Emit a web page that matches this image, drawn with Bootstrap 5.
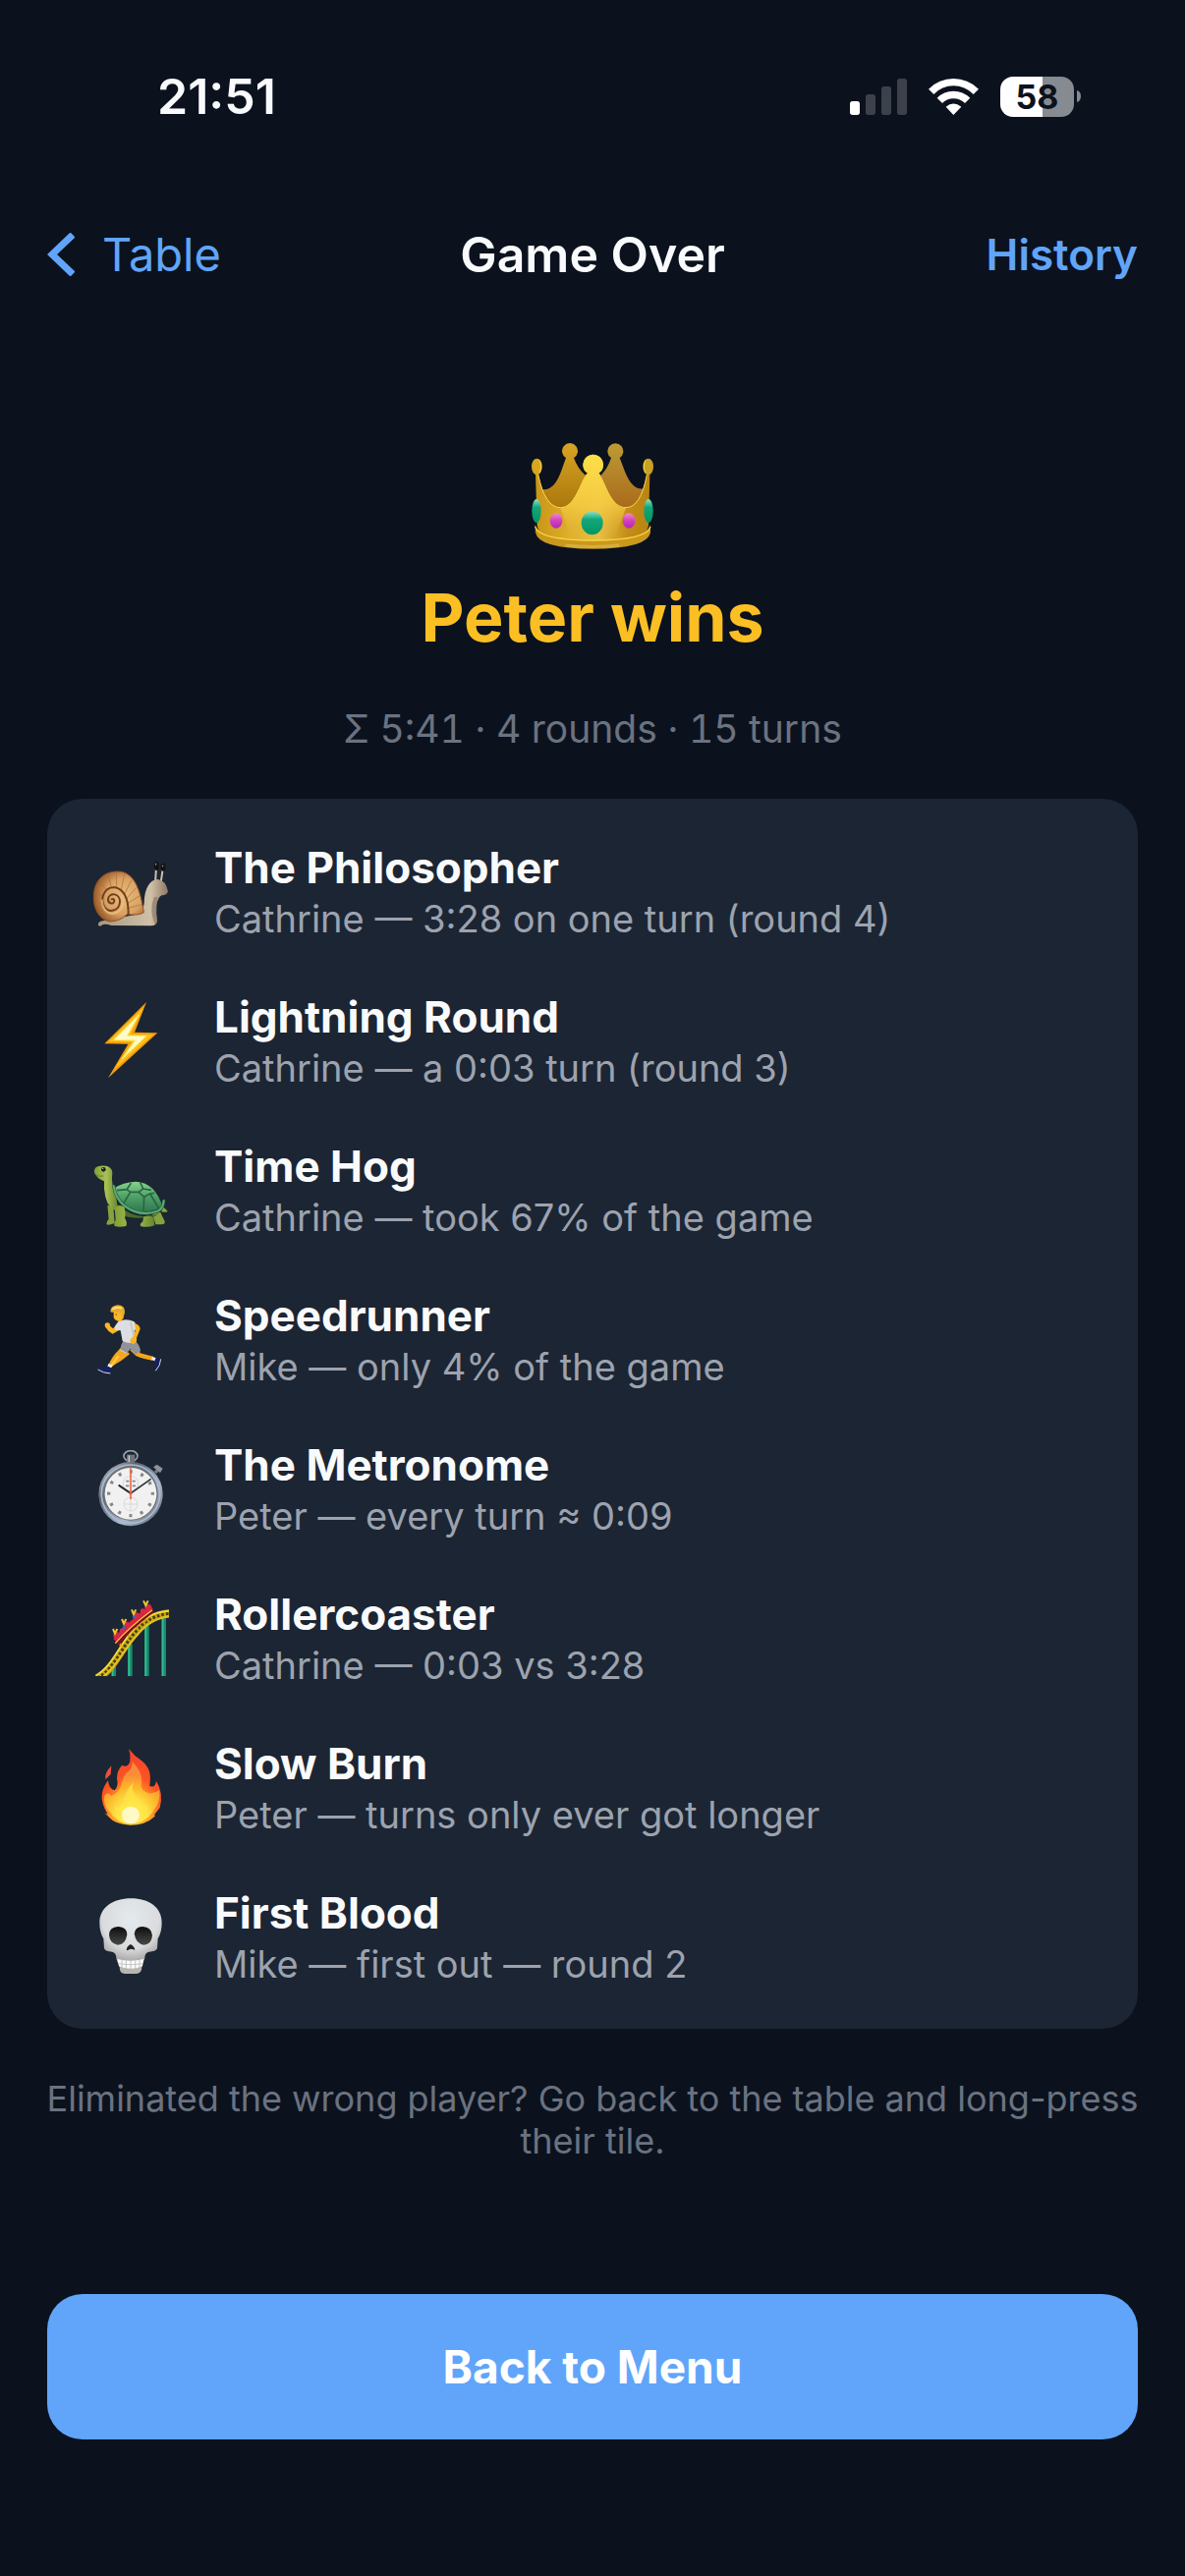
<!DOCTYPE html>
<html lang="en">
<head>
<meta charset="utf-8">
<meta name="viewport" content="width=device-width, initial-scale=1">
<title>Game Over</title>
<link rel="stylesheet" href="https://cdn.jsdelivr.net/npm/bootstrap@5.3.0/dist/css/bootstrap.min.css">
<style>
  :root { --page: #0b121e; --panel: #1c2533; --accent: #60a5fa; --gold: #fbbf24; --muted: #9ca3af; --faint: #6b7280; }
  body { background: var(--page); color: #f9fafb; font-family: Inter, "Liberation Sans", sans-serif; }
  svg { display: block; flex-shrink: 0; }
  .screen { min-height: 100vh; padding: 0 48px; }
  .status-bar { height: 160px; padding: 68px 58px 0 112px; }
  .clock { font-size: 50px; line-height: 60px; font-weight: 600; }
  .signals { gap: 22px; height: 60px; }
  .battery { gap: 3px; }
  .cell { width: 75px; height: 41px; border-radius: 13px; background: linear-gradient(90deg, #fff 57%, #868a91 57%); color: var(--page); font-size: 34px; line-height: 41px; font-weight: 700; }
  .top-nav { height: 198px; }
  .top-nav a, .top-nav h1 { line-height: 60px; }
  .side { flex: 1 1 0; }
  .back { font-size: 47px; gap: 28px; color: var(--accent); }
  .heading { font-size: 50px; font-weight: 600; }
  .history { font-size: 44px; font-weight: 600; color: var(--accent); }
  .winner { padding-top: 93px; }
  .winner h2 { font-size: 68px; line-height: 88px; font-weight: 700; color: var(--gold); margin: 25px 0 0; }
  .summary { font-size: 39px; line-height: 48px; font-variant-numeric: tabular-nums; color: var(--faint); margin: 46px 0 0; }
  .awards { margin: 47px 0 0; padding: 18px 46px; background: var(--panel); border-radius: 36px; }
  .award { height: 152px; gap: 46px; }
  .award svg { width: 78px; height: 78px; }
  .award h2 { font-size: 44px; line-height: 56px; font-weight: 700; margin: 0; }
  .award p { font-size: 38px; line-height: 48px; color: var(--muted); margin: 0; }
  .hint { font-size: 36px; line-height: 43px; color: var(--faint); margin: 50px -12px 0; }
  .menu-btn { margin-top: 134px; height: 148px; border-radius: 36px; color: #fff; font-size: 46px; font-weight: 700; border: 0; --bs-btn-bg: var(--accent); }
</style>
</head>
<body>
<main class="screen d-flex flex-column">
  <header class="status-bar d-flex justify-content-between">
    <span class="clock">21:51</span>
    <div class="signals d-flex align-items-center">
      <svg width="58" height="37" viewBox="75 57 174 111"><rect x="75" y="126" width="30" height="42" rx="8" fill="#fff"/><g fill="#3c414b"><rect x="123" y="105" width="30" height="63" rx="8"/><rect x="171" y="81" width="30" height="87" rx="8"/><rect x="219" y="57" width="30" height="111" rx="8"/></g></svg>
      <svg width="51" height="37" viewBox="315 57 153 111"><path d="M315 89Q347 57 391 57T468 89L452 105Q426 79 391 79T331 105ZM341 116Q362 95 391 95T442 116L426 132Q412 118 391 118T357 132ZM368 143Q391 124 415 143L391 168Z" fill="#fff"/></svg>
      <div class="battery d-flex align-items-center"><span class="cell text-center">58</span><svg width="4" height="12" viewBox="0 0 4 12"><path d="M0 0Q4 1 4 6T0 12Z" fill="#868a91"/></svg></div>
    </div>
  </header>

  <nav class="top-nav d-flex align-items-center">
    <div class="side"><a href="#" class="back d-inline-flex align-items-center text-decoration-none"><svg width="28" height="44" viewBox="0 0 28 44"><path d="M26 2L5 22L26 42" fill="none" stroke="#60a5fa" stroke-width="7"/></svg>Table</a></div>
    <h1 class="heading m-0">Game Over</h1>
    <div class="side text-end"><a href="#" class="history text-decoration-none">History</a></div>
  </nav>

  <section class="winner text-center d-flex flex-column align-items-center">
    <svg width="124" height="108" viewBox="117 93 372 324" role="img" aria-label="Crown">
      <defs>
        <linearGradient id="cr-f" x1="0" y1="0" x2="1" y2="0"><stop offset="0" stop-color="#c99516"/><stop offset=".3" stop-color="#dfae2c"/><stop offset=".55" stop-color="#e9c044"/><stop offset=".8" stop-color="#c48d18"/><stop offset="1" stop-color="#b88313"/></linearGradient>
        <linearGradient id="cr-t" x1="0" y1="0" x2="0" y2="1"><stop offset="0" stop-color="#fde047"/><stop offset=".6" stop-color="#f7cc43" stop-opacity=".8"/><stop offset="1" stop-color="#e5b93c" stop-opacity="0"/></linearGradient>
        <linearGradient id="cr-l" x1="0" y1="0" x2="0" y2="1"><stop offset="0" stop-color="#d8a425"/><stop offset="1" stop-color="#a8760a"/></linearGradient>
        <linearGradient id="cr-r" x1="0" y1="0" x2="0" y2="1"><stop offset="0" stop-color="#bd9b35"/><stop offset="1" stop-color="#a9681a"/></linearGradient>
        <linearGradient id="cr-g" x1="0" y1="0" x2="0" y2="1"><stop offset="0" stop-color="#8fe3c0"/><stop offset=".35" stop-color="#12a67c"/><stop offset="1" stop-color="#04965f"/></linearGradient>
        <linearGradient id="cr-p" x1="0" y1="0" x2="0" y2="1"><stop offset="0" stop-color="#f08ac4"/><stop offset=".5" stop-color="#d33fc0"/><stop offset="1" stop-color="#b22ab0"/></linearGradient>
      </defs>
      <path d="M150 234Q185 240 207 180L222 138A24 24 0 1 1 246 138Q258 172 282 192L260 300H170Z" fill="url(#cr-l)"/>
      <path d="M458 232Q425 238 402 180L386 138A24 24 0 1 0 360 138Q350 170 328 192L350 300H445Z" fill="url(#cr-r)"/>
      <path d="M129 188L138 187Q158 290 205 290C250 290 265 215 288 185A31 31 0 1 1 322 185C345 225 360 290 405 290Q450 290 469 187L478 188L474 345Q470 398 304 398T134 345Z" fill="url(#cr-f)"/>
      <path d="M205 292C250 290 265 215 288 185A31 31 0 1 1 322 185C345 225 360 290 405 292L370 385H240Z" fill="url(#cr-t)"/>
      <path d="M137 190Q158 290 205 290C250 290 265 215 286 187M324 187C345 225 360 290 405 290Q450 290 469 190" fill="none" stroke="#f5d84a" stroke-width="3"/>
      <ellipse cx="133" cy="165" rx="16" ry="25" fill="#d8a51f"/><ellipse cx="473" cy="165" rx="16" ry="25" fill="#c8a024"/><path d="M141 145Q151 165 141 184M465 145Q455 165 465 184" fill="none" stroke="#f3d94c" stroke-width="3"/>
      <path d="M127 340Q133 392 304 392T480 340V366Q470 416 304 416T129 366Z" fill="#c9981d"/>
      <path d="M128 348Q140 390 304 390T480 348" fill="none" stroke="#f6d43c" stroke-width="4"/>
      <path d="M220 405Q300 414 385 405" fill="none" stroke="#dfba55" stroke-width="9" opacity=".6"/>
      <ellipse cx="302" cy="337" rx="33" ry="36" fill="url(#cr-g)"/><ellipse cx="132" cy="300" rx="14" ry="36" fill="url(#cr-g)"/><ellipse cx="474" cy="300" rx="14" ry="36" fill="url(#cr-g)"/>
      <ellipse cx="192" cy="330" rx="19" ry="23" fill="url(#cr-p)"/><ellipse cx="414" cy="330" rx="19" ry="23" fill="url(#cr-p)"/>
    </svg>
    <h2>Peter wins</h2>
    <p class="summary">Σ 5:41 · 4 rounds · 15 turns</p>
  </section>

  <section class="awards">
    <div class="award d-flex align-items-center">
      <svg viewBox="72 54 234 234" aria-hidden="true">
        <defs>
          <radialGradient id="sn-s" cx=".6" cy=".5" r=".6"><stop offset="0" stop-color="#e9bd7d"/><stop offset=".6" stop-color="#d9a163"/><stop offset="1" stop-color="#9a5a26"/></radialGradient>
          <linearGradient id="sn-b" x1="0" y1="0" x2="1" y2="0"><stop offset="0" stop-color="#a8977f"/><stop offset=".75" stop-color="#cfc1a8"/><stop offset="1" stop-color="#8f7765"/></linearGradient>
        </defs>
        <path d="M264 145L267 100M281 145L287 104" stroke="#cdbfa8" stroke-width="6" stroke-linecap="round"/>
        <path d="M90 276Q88 264 104 262L200 244Q226 240 230 210C230 160 250 135 272 135Q296 138 303 172Q300 184 284 184Q272 188 268 215Q266 240 270 262Q268 278 250 277L130 276Q105 268 97 278Z" fill="url(#sn-b)"/>
        <path d="M260 190Q245 230 262 270Q275 277 268 245Q265 215 272 188Z" fill="#806a5b" opacity=".55"/>
        <ellipse cx="268" cy="94" rx="7" ry="14" fill="#111"/><ellipse cx="288" cy="98" rx="7" ry="12" fill="#111"/><path d="M266 86v6M287 92v5" stroke="#aaa" stroke-width="3"/>
        <path d="M76 190C76 140 105 111 150 111C205 111 220 180 229 236Q215 246 178 242Q155 264 125 264C92 258 76 225 76 190Z" fill="url(#sn-s)" stroke="#8d5426" stroke-width="3"/>
        <path d="M120 121L130 160M145 114L146 158M170 119L160 166M192 137L170 180M207 160L175 195M217 185L177 210M223 212L176 224M95 143L115 168M80 175L102 186M80 212L100 206M95 240L108 222" stroke="#a9713b" stroke-width="3" opacity=".7"/>
        <path d="M182 240Q182 170 142 160C108 156 95 195 108 218C122 240 154 232 156 204C157 178 124 172 120 195C119 210 138 214 139 200Q138 193 131 196" fill="none" stroke="#74401a" stroke-width="6" stroke-linecap="round"/>
        <path d="M101 196Q103 237 133 240Q163 236 166 205" fill="none" stroke="#edc68a" stroke-width="6" opacity=".7"/>
      </svg>
      <div><h2>The Philosopher</h2><p>Cathrine — 3:28 on one turn (round 4)</p></div>
    </div>
    <div class="award d-flex align-items-center">
      <svg viewBox="72 510 234 234" aria-hidden="true">
        <path d="M237 510L109 637L181 638L120 742L271 604L201 602Z" fill="#f59a0a"/>
        <path d="M229 525L121 631L192 632L138 716L258 609L190 607Z" fill="#fcc21b"/>
        <path d="M214 549L138 625L203 627L163 683L236 614L178 613Z" fill="#fffbc8" stroke="#fff176" stroke-width="3"/>
      </svg>
      <div><h2>Lightning Round</h2><p>Cathrine — a 0:03 turn (round 3)</p></div>
    </div>
    <div class="award d-flex align-items-center">
      <svg viewBox="72 66 234 234" aria-hidden="true">
        <defs><linearGradient id="tu-s" x1="0" y1="0" x2="0" y2="1"><stop offset="0" stop-color="#85d58b"/><stop offset=".5" stop-color="#4f9f66"/><stop offset="1" stop-color="#2e7751"/></linearGradient><linearGradient id="tu-b" x1="0" y1="0" x2="1" y2="0"><stop offset="0" stop-color="#7f9f35"/><stop offset=".5" stop-color="#aac256"/><stop offset="1" stop-color="#66862c"/></linearGradient></defs>
        <path d="M118 230L136 235L140 285Q120 293 115 288Q114 280 122 273ZM255 255L280 252L293 280Q295 289 283 289H265ZM285 232L302 248Q297 254 283 250Z" fill="#85a23f"/>
        <path d="M145 225Q210 285 275 255L262 265Q200 275 165 262Z" fill="#496b2a"/>
        <path d="M78 130Q76 112 95 110Q132 105 133 132Q128 165 145 205L150 250Q120 240 112 205Q106 180 108 157Q84 148 78 130Z" fill="url(#tu-b)"/>
        <path d="M80 135Q90 145 106 141" fill="none" stroke="#638130" stroke-width="3"/><circle cx="106" cy="121" r="7" fill="#1a2117"/><circle cx="104" cy="118" r="2" fill="#ddd"/>
        <path d="M139 178Q165 160 205 158Q265 162 286 235Q220 270 164 232Q145 212 139 178Z" fill="url(#tu-s)"/>
        <path d="M147 185L177 182L190 163M177 182L188 190L213 190L227 180L218 160M227 180L252 184M188 190L168 224M213 190L230 205L228 250M230 205L248 195L262 193M248 195L275 240" fill="none" stroke="#2b6546" stroke-width="5"/>
        <path d="M137 172Q143 210 170 232Q220 268 272 248Q288 240 290 217" fill="none" stroke="#255f45" stroke-width="10" stroke-linecap="round"/>
        <path d="M137 172Q143 210 170 232Q220 268 272 248Q288 240 290 217" fill="none" stroke="#5eaa72" stroke-width="6" stroke-linecap="round"/>
        <path d="M140 237Q155 225 170 237Q174 260 171 270Q180 283 175 294Q155 299 140 294Q136 285 143 275ZM228 266Q245 258 259 268L262 292Q240 300 219 294Q216 287 226 280Z" fill="url(#tu-b)"/>
      </svg>
      <div><h2>Time Hog</h2><p>Cathrine — took 67% of the game</p></div>
    </div>
    <div class="award d-flex align-items-center">
      <svg viewBox="72 522 234 234" aria-hidden="true">
        <path d="M163 660L186 685L160 705Q142 716 132 722L122 716Q134 690 150 675ZM186 672L210 665L218 682L258 692L255 704Q225 700 205 690Z" fill="#f5a51b"/>
        <path d="M152 690L130 720" stroke="#ffc83a" stroke-width="8"/>
        <path d="M121 714L134 719L130 727L118 723ZM255 692L266 697L262 706L252 702Z" fill="#e8edf2"/>
        <path d="M89 726Q105 724 120 722L132 730L127 742Q105 742 88 732ZM265 699L280 696Q284 708 274 728L264 735Q260 732 265 718Z" fill="#152063"/><path d="M89 732Q105 743 127 744M281 700Q280 720 265 736" fill="none" stroke="#d7dce8" stroke-width="3"/>
        <path d="M166 644L204 645Q218 660 219 676L203 686L189 668L176 683L157 673Q158 656 166 644Z" fill="#90949a"/><path d="M157 672L176 682" stroke="#dadde0" stroke-width="3"/>
        <path d="M145 596L157 610L134 623Q120 617 113 604L124 597L135 607Z" fill="#fbb726"/><circle cx="118" cy="597" r="8" fill="#fbb726"/>
        <path d="M152 585Q175 574 200 586L210 602L200 614L205 648Q185 656 164 645L158 613L141 611Q137 600 152 585Z" fill="#dddee2"/><path d="M188 587L203 647" stroke="#b5b7bf" stroke-width="5" opacity=".6"/>
        <path d="M200 590Q217 595 218 608L207 635Q210 648 196 655Q184 650 188 640L198 630L204 608Z" fill="#fbb41e"/>
        <path d="M137 552L168 548L167 574L158 586Q140 583 137 573Z" fill="#fcb827"/>
        <path d="M127 554Q128 537 149 535Q171 536 171 555Q170 570 163 574L160 560L143 556Q130 560 127 554Z" fill="#e7ad2d"/><path d="M133 548Q145 539 162 545" fill="none" stroke="#ffe07a" stroke-width="5"/><circle cx="145" cy="564" r="2" fill="#623f18"/>
      </svg>
      <div><h2>Speedrunner</h2><p>Mike — only 4% of the game</p></div>
    </div>
    <div class="award d-flex align-items-center">
      <svg viewBox="72 78 234 234" aria-hidden="true">
        <defs><linearGradient id="st-r" x1="0" y1="0" x2="1" y2="1"><stop offset="0" stop-color="#dfe4e9"/><stop offset=".3" stop-color="#5c636b"/><stop offset=".65" stop-color="#adb9ca"/><stop offset="1" stop-color="#56565b"/></linearGradient></defs>
        <path d="M264 147L276 133" stroke="#767b82" stroke-width="10"/><path d="M258 130L269 122L287 134L279 148Z" fill="#8d9299"/>
        <ellipse cx="189" cy="96" rx="21" ry="16" fill="none" stroke="#9ca1a6" stroke-width="5"/><path d="M177 92H202V117H177Z" fill="#6d737b"/><path d="M184 94V114" stroke="#c9ced4" stroke-width="4"/>
        <circle cx="189" cy="212" r="98" fill="url(#st-r)"/><circle cx="189" cy="212" r="89" fill="none" stroke="#a6bbd9" stroke-width="5"/><circle cx="189" cy="210" r="83" fill="#6d7075"/><circle cx="189" cy="211" r="79" fill="#f1f1f1"/>
        <g fill="none" stroke="#cfcfcf" stroke-width="2"><circle cx="189" cy="180" r="23"/><circle cx="189" cy="243" r="21"/><path d="M189 222V264M168 243H210"/></g>
        <circle cx="189" cy="211" r="67" fill="none" stroke="#85878b" stroke-width="10" stroke-dasharray="9 26" transform="rotate(-4 189 211)"/>
        <path d="M175 173h9M194 173h9M174 187h10M194 187h10" stroke="#888" stroke-width="5"/>
        <path d="M189 210L152 185" stroke="#20272c" stroke-width="6"/><path d="M189 210L251 166" stroke="#2d393d" stroke-width="5"/><path d="M189 130V228" stroke="#ea6a4d" stroke-width="5"/><circle cx="189" cy="209" r="5" fill="#d76048"/>
      </svg>
      <div><h2>The Metronome</h2><p>Peter — every turn ≈ 0:09</p></div>
    </div>
    <div class="award d-flex align-items-center">
      <svg viewBox="72 534 234 234" aria-hidden="true">
        <path d="M137 735V768M187 670V768M238 612V768M290 588V768" stroke="#168d6c" stroke-width="14"/><path d="M134 740V768M184 675V768M235 615V768M287 590V768" stroke="#35bd94" stroke-width="5"/>
        <path d="M88 774C140 745 160 680 205 632Q245 583 306 577" fill="none" stroke="#caa916" stroke-width="24"/>
        <path d="M88 774C140 745 160 680 205 632Q245 583 306 577" fill="none" stroke="#4d3b0d" stroke-width="9" stroke-dasharray="8 6"/>
        <path d="M82 767C132 740 152 675 198 625Q240 574 306 569" fill="none" stroke="#f1da3c" stroke-width="5"/><path d="M106 768C145 740 170 683 212 640Q250 593 306 586" fill="none" stroke="#e2c526" stroke-width="5"/>
        <path d="M155 665l4 12M180 640l5 11M205 615l6 11M228 593l6 10" stroke="#caa916" stroke-width="7"/>
        <path d="M146 670Q180 623 256 566" fill="none" stroke="#7f0e20" stroke-width="16"/><path d="M141 659Q180 612 253 557" fill="none" stroke="#e02137" stroke-width="14"/><path d="M142 668Q180 622 255 566" fill="none" stroke="#f6ce42" stroke-width="4"/>
        <g fill="#d5284b"><circle cx="146" cy="644" r="10"/><circle cx="163" cy="630" r="8"/><circle cx="177" cy="612" r="10"/><circle cx="207" cy="584" r="10"/><circle cx="226" cy="570" r="8"/><circle cx="242" cy="558" r="10"/></g>
        <path d="M135 624l6 14l7-14M162 594l6 14l7-14M192 565l6 14l7-14M228 538l7 14l7-14" fill="none" stroke="#e9ca31" stroke-width="6"/><path d="M164 620h9M195 588h9" stroke="#2b6fb0" stroke-width="8"/>
      </svg>
      <div><h2>Rollercoaster</h2><p>Cathrine — 0:03 vs 3:28</p></div>
    </div>
    <div class="award d-flex align-items-center">
      <svg viewBox="72 90 234 234" aria-hidden="true">
        <defs><radialGradient id="fi-o" cx=".5" cy=".9" r=".85"><stop offset="0" stop-color="#ffdc38"/><stop offset=".4" stop-color="#fd9b28"/><stop offset=".65" stop-color="#fb5424"/><stop offset="1" stop-color="#f4442f"/></radialGradient><radialGradient id="fi-i" cx=".5" cy=".9" r=".7"><stop offset="0" stop-color="#fffbd7"/><stop offset=".3" stop-color="#fff04f"/><stop offset=".7" stop-color="#fdb82c"/><stop offset="1" stop-color="#fb8b38"/></radialGradient></defs>
        <path d="M130 142L128 168L112 184Q108 165 130 142Z" fill="#ef5039"/>
        <path d="M183 90Q200 112 223 127C250 150 251 170 247 204Q265 210 267 188Q290 225 278 270L262 290L263 296Q235 323 187 323Q140 320 124 300L109 286L119 290Q98 255 101 230Q105 205 120 187Q123 215 140 217Q153 205 147 181Q147 155 163 140Q178 149 186 132Q190 112 183 90Z" fill="url(#fi-o)"/>
        <path d="M194 130Q225 160 222 190Q218 220 240 224Q260 230 276 216Q283 250 258 280Q235 318 187 319Q145 315 125 283Q103 260 109 233Q118 220 130 234Q150 225 160 203Q167 165 184 158Q195 146 194 130Z" fill="url(#fi-i)"/>
        <path d="M199 192Q187 215 206 235Q222 255 217 275L235 255Q251 283 227 306Q190 325 155 303Q138 290 141 265Q154 280 163 274Q170 215 199 192Z" fill="#ffe446" opacity=".75"/><ellipse cx="189" cy="292" rx="27" ry="26" fill="#fffce2" opacity=".8"/>
      </svg>
      <div><h2>Slow Burn</h2><p>Peter — turns only ever got longer</p></div>
    </div>
    <div class="award d-flex align-items-center">
      <svg viewBox="72 546 234 234" aria-hidden="true">
        <defs><radialGradient id="sk-h" cx=".5" cy=".3" r=".65"><stop offset="0" stop-color="#e4eaee"/><stop offset=".7" stop-color="#dadcde"/><stop offset="1" stop-color="#a9a8a6"/></radialGradient><linearGradient id="sk-e" x1="0" y1="0" x2="0" y2="1"><stop offset="0" stop-color="#0d0d0d"/><stop offset="1" stop-color="#4a4948"/></linearGradient></defs>
        <path d="M151 725H227L222 765Q218 777 204 777H174Q158 777 156 765Z" fill="#b8b6b0"/>
        <path d="M94 620C94 575 135 547 190 547S284 575 284 620Q284 650 272 670L270 700Q265 710 245 710Q232 712 232 730L226 745Q190 755 150 745L145 730Q145 712 132 710Q113 710 108 700L106 670Q94 650 94 620Z" fill="url(#sk-h)"/>
        <path d="M123 658Q124 634 151 633Q178 634 178 658Q173 689 149 689Q124 685 123 658ZM200 655Q202 634 225 633Q253 635 255 660Q253 687 230 689Q205 687 200 655Z" fill="url(#sk-e)"/>
        <path d="M176 704Q177 694 188 687Q201 693 202 704L190 701L178 706Z" fill="#252424"/>
        <path d="M148 732Q188 743 229 732L225 754Q190 769 153 754Z" fill="#fafafa"/><path d="M162 733V758M175 736V762M189 737V763M203 736V762M216 733V758M150 746Q190 753 227 746" fill="none" stroke="#aeada9" stroke-width="2"/>
      </svg>
      <div><h2>First Blood</h2><p>Mike — first out — round 2</p></div>
    </div>
  </section>

  <p class="hint text-center">Eliminated the wrong player? Go back to the table and long-press their tile.</p>
  <button type="button" class="btn btn-primary menu-btn">Back to Menu</button>
</main>
<script src="https://cdn.jsdelivr.net/npm/bootstrap@5.3.0/dist/js/bootstrap.bundle.min.js"></script>
</body>
</html>
